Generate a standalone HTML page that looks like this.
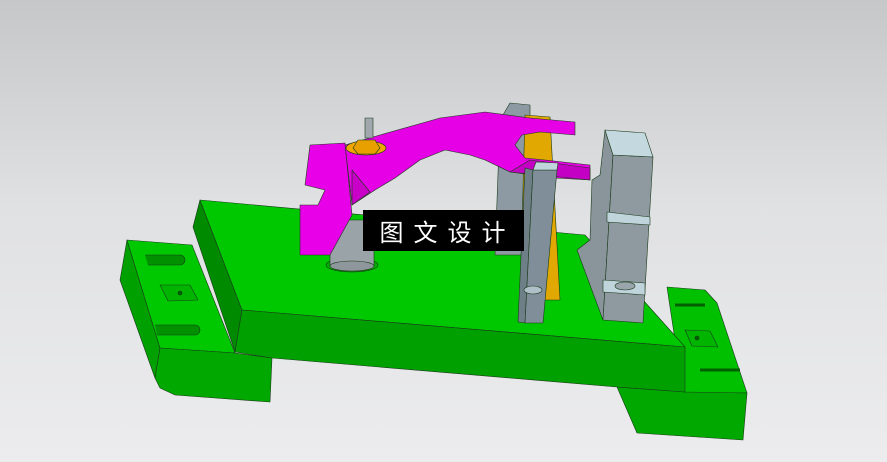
<!DOCTYPE html>
<html><head><meta charset="utf-8"><style>
html,body{margin:0;padding:0;width:887px;height:462px;overflow:hidden}
body{background:linear-gradient(#c6c7c9,#e0e1e3 45%,#ececee)}
.t{position:absolute;left:363px;top:210px;width:161px;height:41px;background:#000;color:#fff;font:24px "Noto Sans CJK SC","WenQuanYi Zen Hei",sans-serif;line-height:41px;text-align:center;letter-spacing:10px;text-indent:8px}
</style></head><body>
<svg width="887" height="462" style="position:absolute;left:0;top:0" stroke="#1a3a1a" stroke-width="0.6" stroke-linejoin="round">
<!-- left foot -->
<polygon points="120,280 127,240 160,348 155,378" fill="#00a000"/>
<polygon points="127,240 192,245 235,353 160,348" fill="#00c800"/>
<polygon points="155,378 160,348 235,353 272,358 270,402 175,395 160,388" fill="#00a800"/>
<path d="M145,255 h35 a5,5 0 0 1 0,10 h-32 M155,325 h40 a5,5 0 0 1 0,10 h-38" fill="#009000"/>
<polygon points="160,285 190,285 198,300 168,301" fill="#00b400"/>
<circle cx="180" cy="293" r="2" fill="#006000"/>
<!-- right foot -->
<polygon points="667,287 705,290 717,303 747,393 683,393" fill="#00c000"/>
<polygon points="617,387 685,392 747,393 743,440 637,433" fill="#00a800"/>
<path d="M675,305 h30 M700,370 h40" stroke="#006000" stroke-width="3"/>
<polygon points="685,330 710,331 718,347 692,346" fill="#00b400"/>
<circle cx="697" cy="338" r="2" fill="#006000"/>
<!-- main plate -->
<polygon points="200,200 242,310 235,352 193,227" fill="#008a00"/>
<polygon points="200,200 585,235 685,347 242,310" fill="#00c800"/>
<polygon points="242,310 685,347 685,392 617,387 272,358 235,352" fill="#00a000"/>
<!-- gray cylinder -->
<ellipse cx="352" cy="265" rx="26" ry="7" fill="#00b000"/>
<rect x="330" y="220" width="44" height="46" fill="#9aa3a8"/>
<ellipse cx="352" cy="266" rx="22" ry="5" fill="#8e979c"/>
<!-- back bars -->
<polygon points="510,103 530,105 530,255 495,255 500,120" fill="#8d9aa3"/>
<polygon points="525,115 550,117 560,300 520,300" fill="#e0a800"/>
<!-- magenta clamp -->
<polygon points="310,145 345,143 352,215 330,255 300,255 300,205 318,205 325,190 305,185" fill="#e800e8"/>
<polygon points="345,145 380,135 440,118 485,112 530,118 575,122 575,135 540,132 522,135 515,145 525,158 545,160 590,165 590,180 555,178 510,172 485,160 470,155 445,150 420,160 395,178 375,190 352,205" fill="#e600e6"/>
<polygon points="352,170 370,192 352,205" fill="#c800c8"/>
<polygon points="510,172 590,180 590,168 530,160" fill="#c400c4"/>
<!-- bolt -->
<rect x="365" y="118" width="8" height="20" fill="#a0a8ad"/>
<ellipse cx="366" cy="148" rx="20" ry="7" fill="#f0a800"/>
<polygon points="358,140 375,140 380,148 375,154 358,154 353,148" fill="#e8a000"/>
<!-- front bar -->
<polygon points="525,168 533,170 525,323 518,322" fill="#6f7f88"/>
<polygon points="533,170 557,170 543,323 525,323" fill="#7f8e98"/>
<polygon points="533,170 557,170 558,163 536,162" fill="#c0d4dc"/>
<ellipse cx="533" cy="290" rx="9" ry="4" fill="#b0c0c8"/>
<!-- gray blocks -->
<polygon points="605,130 613,155 603,320 577,250 590,240 592,180 600,175" fill="#8a959b"/>
<polygon points="613,155 653,157 643,323 603,320" fill="#8f9aa0"/>
<polygon points="605,130 645,133 653,157 613,155" fill="#c4d8e0"/>
<polygon points="607,212 650,217 650,225 607,222" fill="#c0d4dc"/>
<polygon points="603,280 645,283 645,295 603,292" fill="#c0d4dc"/>
<ellipse cx="625" cy="286" rx="10" ry="4" fill="#9aa6ac"/>
</svg>
<div class="t">图文设计</div>
</body></html>
